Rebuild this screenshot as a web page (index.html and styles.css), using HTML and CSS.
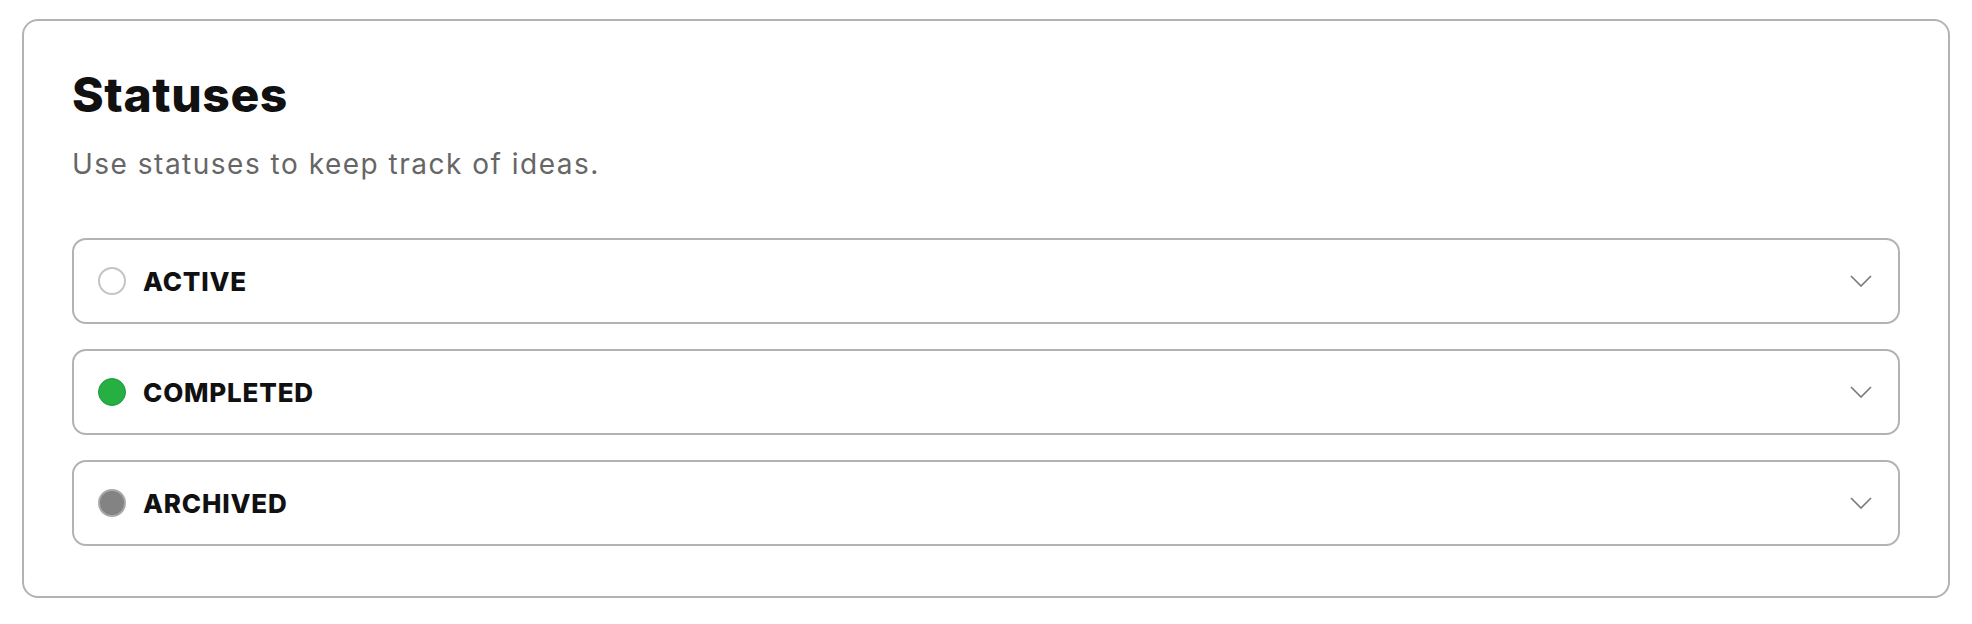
FILE: index.html
```html
<!DOCTYPE html>
<html>
  <head>
    <title>Statuses</title>
    <link rel="stylesheet" href="styles.css">
  </head>
  <body>
    <div class="card">
      <h1 class="title">Statuses</h1>
      <p class="subtitle">Use statuses to keep track of ideas.</p>

      <ul class="statuslist">
        <li class="status">
          <span class="dot dot-active"></span>
          <span class="label">ACTIVE</span>
          <svg class="chevron" width="22" height="12" viewBox="0 0 22 12"><path d="M1 1l10 10L21 1" /></svg>
        </li>
        <li class="status">
          <span class="dot dot-completed"></span>
          <span class="label">COMPLETED</span>
          <svg class="chevron" width="22" height="12" viewBox="0 0 22 12"><path d="M1 1l10 10L21 1" /></svg>
        </li>
        <li class="status">
          <span class="dot dot-archived"></span>
          <span class="label">ARCHIVED</span>
          <svg class="chevron" width="22" height="12" viewBox="0 0 22 12"><path d="M1 1l10 10L21 1" /></svg>
        </li>
      </ul>
    </div>
  </body>
</html>
```

FILE: styles.css
```css
html, body { margin: 0; background: #fff; }
body { font-family: Inter, "Noto Sans", sans-serif; color: #111; padding: 19px 22px; }

.card { border: 2px solid #b3b3b3; border-radius: 16px; padding: 46px 48px 50px; }
.title { font-size: 48px; font-weight: 800; line-height: 56px; margin: 0; letter-spacing: 0.6px; }
.subtitle { font-size: 28px; color: #666; margin: 23px 0 0; line-height: 36px; letter-spacing: 1.5px; }

.statuslist { list-style: none; margin: 56px 0 0; padding: 0; display: flex; flex-direction: column; gap: 25px; }
.status { display: flex; align-items: center; height: 82px; border: 2px solid #b3b3b3; border-radius: 14px; padding: 0 26px 0 24px; }
.dot { width: 28px; height: 28px; border-radius: 50%; box-sizing: border-box; flex: none; }
.dot-active { border: 2px solid #c4c4c4; }
.dot-completed { background: #26af43; border: 1px solid #1f9a3a; }
.dot-archived { background: #838383; border: 2px solid #a9a9a9; }
.label { font-size: 26px; font-weight: 800; margin-left: 17px; flex-grow: 1; letter-spacing: 0.8px; }
.chevron { fill: none; stroke: #777; stroke-width: 1.6; flex: none; }
```
